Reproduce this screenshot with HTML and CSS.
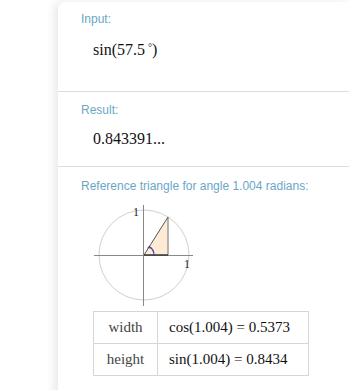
FILE: index.html
```html
<!DOCTYPE html>
<html lang="en">
<head>
  <meta charset="UTF-8">
  <title>sin(57.5°)</title>
  <link rel="stylesheet" href="styles.css">
</head>
<body>
  <div class="page">
    <div class="card">
      <section class="pod pod-input">
        <h2 class="pod-title">Input:</h2>
        <p class="math">sin(57.5<span class="deg">°</span>)</p>
      </section>

      <section class="pod pod-result">
        <h2 class="pod-title">Result:</h2>
        <p class="math">0.843391...</p>
      </section>

      <section class="pod pod-triangle">
        <h2 class="pod-title">Reference triangle for angle 1.004 radians:</h2>
        <svg class="diagram" width="110" height="106" viewBox="0 0 110 106">
          <circle cx="54" cy="54" r="45" fill="none" stroke="#d0d0d0" stroke-width="1"/>
          <line x1="4" y1="54.5" x2="103" y2="54.5" stroke="#888" stroke-width="1"/>
          <line x1="53.5" y1="4" x2="53.5" y2="105" stroke="#888" stroke-width="1"/>
          <polygon points="54,54 78,54 78,16" fill="#fdebd6"/>
          <line x1="78" y1="54" x2="78" y2="16" stroke="#a09a94" stroke-width="1.5"/>
          <line x1="54" y1="54" x2="78" y2="16" stroke="#555" stroke-width="1"/>
          <line x1="54" y1="54" x2="78" y2="54" stroke="#333" stroke-width="1.5"/>
          <path d="M64,54 A10,10 0 0 0 59.3,45.5" fill="none" stroke="#3a3aa0" stroke-width="1.2"/>
          <path d="M57.5,47 L59.3,45.5 L60.2,47.8" fill="none" stroke="#3a3aa0" stroke-width="1"/>
          <text x="43" y="15" class="tick">1</text>
          <text x="94" y="67" class="tick">1</text>
        </svg>
        <table class="values">
          <tr>
            <td class="name">width</td>
            <td>cos(1.004) = 0.5373</td>
          </tr>
          <tr>
            <td class="name">height</td>
            <td>sin(1.004) = 0.8434</td>
          </tr>
        </table>
      </section>
    </div>
  </div>
</body>
</html>
```

FILE: styles.css
```css
* {
  box-sizing: border-box;
  margin: 0;
  padding: 0;
}

body {
  background: #fff;
  font-family: 'Liberation Sans', Arial, sans-serif;
  color: #222;
}

.page {
  padding: 2px 0 0 58px;
  height: 390px;
  overflow: hidden;
}

.card {
  background: #fff;
  border-radius: 7px 0 0 0;
  box-shadow: -4px 0 10px rgba(0, 0, 0, 0.09);
  min-height: 400px;
}

.pod {
  border-bottom: 1px solid #dcdcdc;
  padding: 10px 0 0 23px;
}

.pod-input {
  height: 90px;
}

.pod-result {
  height: 75px;
  padding-top: 11px;
}

.pod-triangle {
  border-bottom: none;
  padding-top: 12px;
}

.pod-title {
  font-size: 12px;
  font-weight: normal;
  line-height: 14px;
  color: #6aa7c6;
}

.math {
  font-family: 'Liberation Serif', 'Times New Roman', serif;
  font-size: 16px;
  line-height: 18px;
  margin: 13px 0 0 12px;
  color: #111;
}

.deg {
  font-size: 10px;
  vertical-align: 4px;
  margin-left: 3px;
}

.diagram {
  display: block;
  margin: 8px 0 0 9px;
}

.tick {
  font-family: 'Liberation Serif', serif;
  font-size: 12px;
  fill: #222;
}

.values {
  border-collapse: collapse;
  margin: 4px 0 0 12px;
  font-family: 'Liberation Serif', 'Times New Roman', serif;
  font-size: 15px;
}

.values td {
  border: 1px solid #d6d6d6;
  height: 32px;
  padding: 0 11px;
  color: #111;
}

.values td.name {
  color: #444;
  width: 64px;
  text-align: center;
  padding: 0;
}

.values td + td {
  width: 151px;
}
```
